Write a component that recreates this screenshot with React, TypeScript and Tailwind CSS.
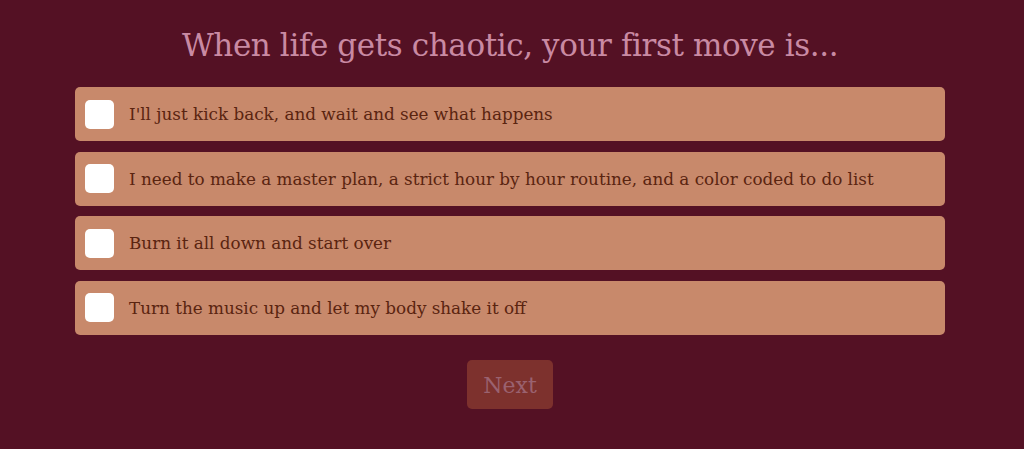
import React from "react";

const options = [
  "I'll just kick back, and wait and see what happens",
  "I need to make a master plan, a strict hour by hour routine, and a color coded to do list",
  "Burn it all down and start over",
  "Turn the music up and let my body shake it off",
];

const serif = { fontFamily: '"DejaVu Serif", "Liberation Serif", serif' };

export default function App() {
  return (
    <div className="min-h-screen w-full bg-[#541124]" style={serif}>
      <div className="flex flex-col items-center pt-[21px] pr-[4px]">
        <h1 className="text-[31px] leading-[48px] text-[#c98aa3] tracking-[-0.4px]">
          When life gets chaotic, your first move is...
        </h1>
        <div className="mt-[18px] flex w-[870px] flex-col gap-[10.5px]">
          {options.map((o) => (
            <label
              key={o}
              className="flex h-[54px] items-center gap-[15px] rounded-[5px] bg-[#c8896b] pl-[10px] pt-[2px] text-[16.8px] text-[#5a2410]"
            >
              <span className="-mt-[2px] h-[29px] w-[29px] shrink-0 rounded-[5px] bg-white" />
              <span>{o}</span>
            </label>
          ))}
        </div>
        <button className="mt-[25px] h-[49px] w-[86px] rounded-[5px] bg-[#7d312d] pt-[3px] text-[22px] text-[#9a6270]">
          Next
        </button>
      </div>
    </div>
  );
}
